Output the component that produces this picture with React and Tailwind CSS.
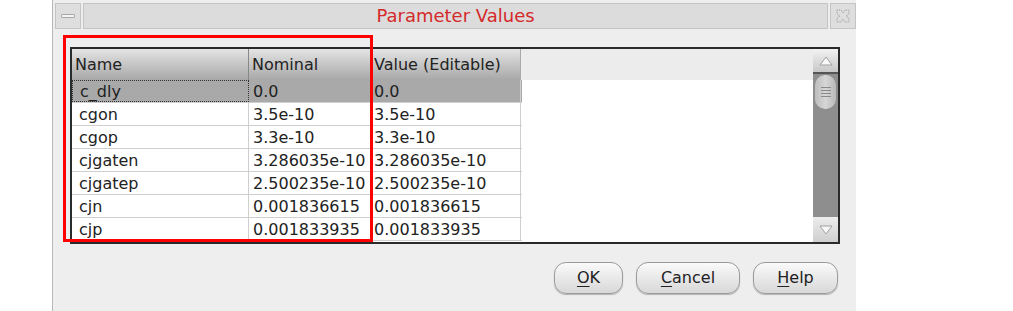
import React from "react";

const rows = [
  ["c_dly", "0.0", "0.0"],
  ["cgon", "3.5e-10", "3.5e-10"],
  ["cgop", "3.3e-10", "3.3e-10"],
  ["cjgaten", "3.286035e-10", "3.286035e-10"],
  ["cjgatep", "2.500235e-10", "2.500235e-10"],
  ["cjn", "0.001836615", "0.001836615"],
  ["cjp", "0.001833935", "0.001833935"],
];

function DlgButton({ mn, rest, w }) {
  return (
    <button
      className={
        "h-[32px] rounded-[12px] border border-[#9a9a9a] bg-gradient-to-b from-[#fafafa] to-[#d8d8d8] text-[16px] text-[#222] shadow-[0_1px_1px_rgba(0,0,0,0.25)] " +
        w
      }
    >
      <span className="underline underline-offset-[3px]">{mn}</span>
      {rest}
    </button>
  );
}

export default function App() {
  return (
    <div
      className="relative h-[311px] w-[1013px] overflow-hidden bg-white"
      style={{ fontFamily: '"DejaVu Sans", sans-serif' }}
    >
      <div className="ml-[52px] flex h-full w-[804px] flex-col border-l border-[#b8b8b8] bg-[#eeeeee]">
        {/* title bar */}
        <div className="mt-[3px] flex h-[26px] gap-[2px] pl-[2px]">
          <div className="flex w-[26px] items-center justify-center border border-[#c4c4c4] bg-[#dedede]">
            <div className="h-[4px] w-[14px] rounded-[1px] border border-[#a8a8a8] bg-[#f4f4f4]" />
          </div>
          <div className="flex flex-1 items-center justify-center border border-[#c4c4c4] bg-[#dcdcdc] text-[18px] leading-none text-[#d42a2a]">
            Parameter Values
          </div>
          <div className="flex w-[26px] items-center justify-center border border-[#c4c4c4] bg-[#dedede]">
            <svg width="18" height="18" viewBox="0 0 18 18">
              <path
                d="M3 3 L7 3 L9 6 L11 3 L15 3 L15 7 L12 9 L15 11 L15 15 L11 15 L9 12 L7 15 L3 15 L3 11 L6 9 L3 7 Z"
                fill="none"
                stroke="#9a9a9a"
                strokeWidth="1"
                strokeDasharray="1 1"
              />
            </svg>
          </div>
        </div>

        {/* table */}
        <div className="ml-[17px] mt-[18px] flex h-[197px] w-[770px] border-2 border-[#2a2a2a] bg-white">
          <div className="flex flex-1 flex-col text-[16px] text-[#222]">
            <div className="flex h-[31px] bg-gradient-to-b from-[#e4e4e4] to-[#a8a8a8]">
              <div className="flex w-[177px] items-center border-r border-[#888] pl-[3px]">Name</div>
              <div className="flex w-[122px] items-center border-r border-[#888] pl-[3px]">Nominal</div>
              <div className="flex w-[150px] items-center border-r border-[#aaa] pl-[3px]">Value (Editable)</div>
              <div className="flex-1 bg-[#ececec]" />
            </div>
            {rows.map((r, i) => (
              <div
                key={r[0]}
                className={
                  "flex h-[23px] w-[450px] border-b border-[#cfcfcf] " +
                  (i === 0 ? "bg-[#a9a9a9]" : "bg-white")
                }
              >
                <div
                  className={
                    "flex w-[177px] items-center pl-[7px] pt-[2px] " +
                    (i === 0 ? "border border-dotted border-[#333]" : "border-r border-[#cfcfcf]")
                  }
                >
                  {r[0]}
                </div>
                <div className="flex w-[122px] items-center border-r border-[#cfcfcf] pl-[4px] pt-[2px]">{r[1]}</div>
                <div className="flex w-[150px] items-center border-r border-[#cfcfcf] pl-[3px] pt-[2px]">{r[2]}</div>
              </div>
            ))}
          </div>

          {/* scrollbar */}
          <div className="flex w-[25px] flex-col bg-[#8e8e8e]">
            <div className="flex h-[25px] items-center justify-center border-b-2 border-[#555] bg-gradient-to-b from-[#f2f2f2] to-[#c8c8c8]">
              <svg width="14" height="10" viewBox="0 0 14 10">
                <path d="M7 1 L13 9 L1 9 Z" fill="#f8f8f8" stroke="#a0a0a0" />
              </svg>
            </div>
            <div className="mx-[2px] mt-[1px] flex h-[34px] flex-col items-center justify-center gap-[2px] rounded-[10px] bg-gradient-to-r from-[#bdbdbd] via-[#d6d6d6] to-[#b8b8b8]">
              <div className="h-px w-[10px] bg-[#8a8a8a]" />
              <div className="h-px w-[10px] bg-[#8a8a8a]" />
              <div className="h-px w-[10px] bg-[#8a8a8a]" />
              <div className="h-px w-[10px] bg-[#8a8a8a]" />
            </div>
            <div className="flex-1" />
            <div className="flex h-[25px] items-center justify-center bg-gradient-to-b from-[#ececec] to-[#cfcfcf]">
              <svg width="14" height="10" viewBox="0 0 14 10">
                <path d="M1 1 L13 1 L7 9 Z" fill="#f8f8f8" stroke="#a0a0a0" />
              </svg>
            </div>
          </div>
        </div>

        {/* buttons */}
        <div className="mr-[18px] mt-[18px] flex justify-end gap-[13px]">
          <DlgButton mn="O" rest="K" w="w-[69px]" />
          <DlgButton mn="C" rest="ancel" w="w-[104px]" />
          <DlgButton mn="H" rest="elp" w="w-[85px]" />
        </div>
      </div>

      {/* highlight box */}
      <div className="absolute left-[63px] top-[35px] h-[207px] w-[310px] border-[3px] border-[#ff0000]" />
    </div>
  );
}
